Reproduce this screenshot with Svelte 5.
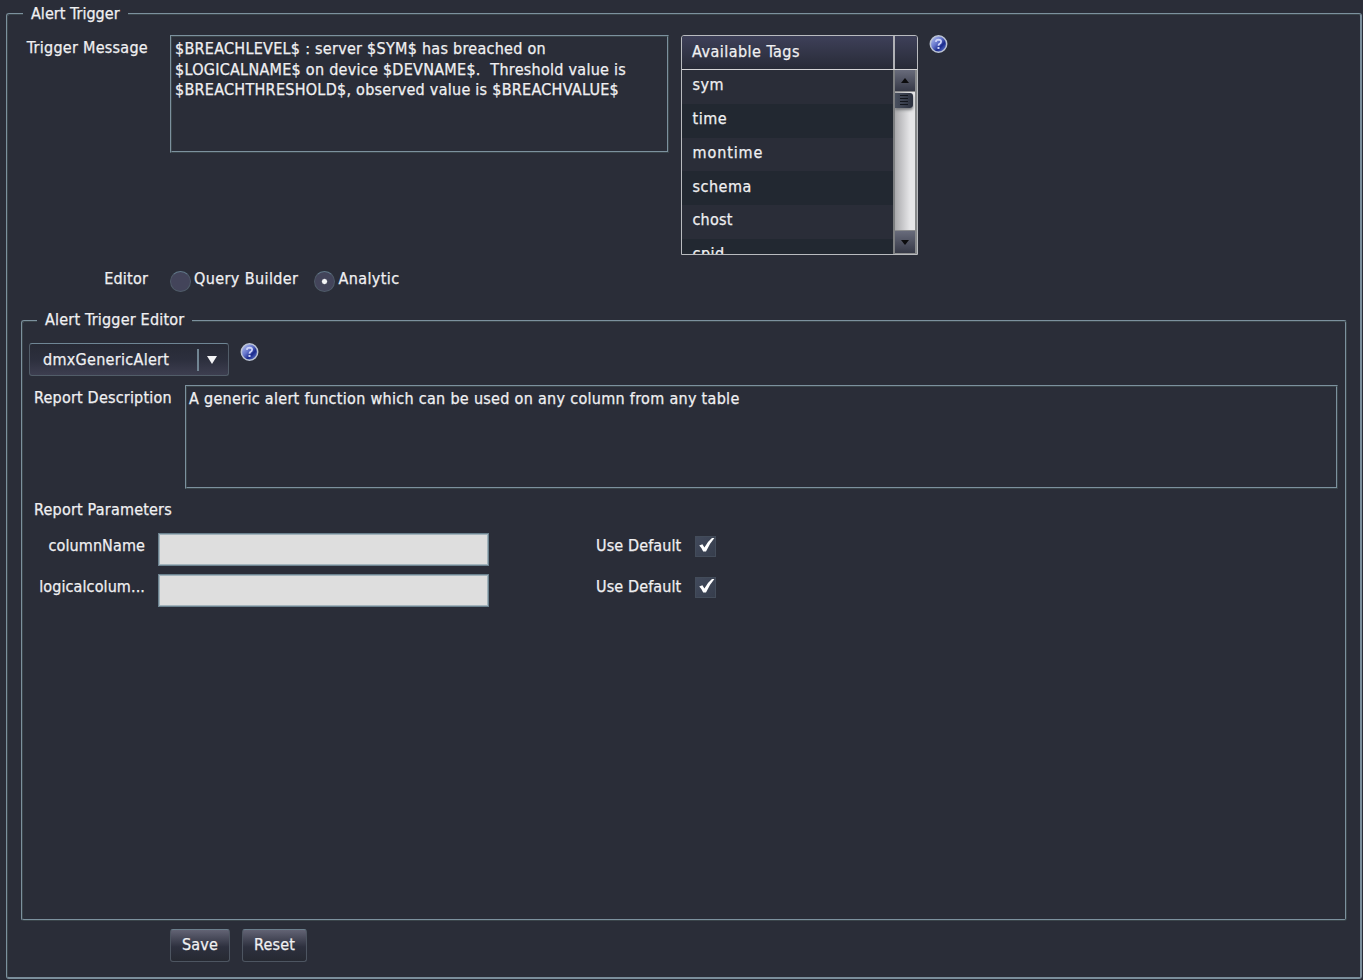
<script>
  let message = '$BREACHLEVEL$ : server $SYM$ has breached on\n$LOGICALNAME$ on device $DEVNAME$.  Threshold value is\n$BREACHTHRESHOLD$, observed value is $BREACHVALUE$';
  let tags = ['sym', 'time', 'montime', 'schema', 'chost', 'cpid'];
  let editor = $state('Analytic');
  let editors = ['Query Builder', 'Analytic'];
  let params = $state([
    { name: 'columnName', useDefault: true },
    { name: 'logicalcolum...', useDefault: true }
  ]);

  function toggle(i) {
    params[i].useDefault = !params[i].useDefault;
  }
</script>

{#snippet help()}
  <svg class="help" viewBox="0 0 19 19">
    <defs>
      <linearGradient id="ball" x1="0" y1="0" x2="1" y2="1">
        <stop offset="0" stop-color="#c3cff5" />
        <stop offset="0.42" stop-color="#6676cc" />
        <stop offset="0.65" stop-color="#1a2a8c" />
        <stop offset="1" stop-color="#7f9aec" />
      </linearGradient>
    </defs>
    <circle cx="9.5" cy="9" r="8.2" fill="url(#ball)" stroke="#bcc4d4" stroke-width="1.5" />
    <path d="M6.8 6.8Q7 4.6 9.6 4.6Q12.2 4.7 12.1 6.8Q12 8.2 10.5 8.9Q9.5 9.4 9.5 10.8" fill="none" stroke="#cdd4fa" stroke-width="1.8" />
    <rect x="8.5" y="12" width="2" height="2" fill="#cdd4fa" />
  </svg>
{/snippet}

<div class="page">
  <fieldset class="panel outer">
    <legend>Alert Trigger</legend>

    <div class="message-row">
      <span class="label trigger">Trigger Message</span>
      <div class="box message">{message}</div>
      <div class="tags">
        <div class="tags-head">
          <span>Available Tags</span>
          <i></i>
        </div>
        <div class="tags-body">
          <div class="tags-list">
            {#each tags as tag}
              <div class="tag">{tag}</div>
            {/each}
          </div>
          <div class="scroll">
            <div class="scroll-btn up">
              <svg viewBox="0 0 8 5"><path d="M0 5L4 0L8 5Z" /></svg>
            </div>
            <div class="thumb"><i></i></div>
            <div class="scroll-btn down">
              <svg viewBox="0 0 8 5"><path d="M0 0L4 5L8 0Z" /></svg>
            </div>
          </div>
        </div>
      </div>
      {@render help()}
    </div>

    <div class="editor-row">
      <span class="label">Editor</span>
      {#each editors as name}
        <button class="radio" onclick={() => (editor = name)}>
          <span class="dot" class:on={editor === name}></span>
          <span class="radio-text">{name}</span>
        </button>
      {/each}
    </div>

    <fieldset class="panel inner">
      <legend class="sub">Alert Trigger Editor</legend>
      <div class="select-row">
        <div class="select">
          <span>dmxGenericAlert</span>
          <i></i>
          <svg viewBox="0 0 10 8"><path d="M0 0H10L5 8Z" /></svg>
        </div>
        {@render help()}
      </div>
      <div class="desc-row">
        <span class="desc-label">Report Description</span>
        <div class="box desc">A generic alert function which can be used on any column from any table</div>
      </div>
      <div class="params-title">Report Parameters</div>
      {#each params as param, i}
        <div class="param">
          <span class="param-name">{param.name}</span>
          <div class="field"></div>
          <span class="use">Use Default</span>
          <button class="check" aria-label="Use Default" onclick={() => toggle(i)}>
            {#if param.useDefault}
              <svg viewBox="0 0 21 21"><path d="M4.2 9.6L7.4 8.2L9.4 11.6Q12.5 5.5 17 2H19.4Q14.2 8 11 15.6H8.2Q6.8 12 4.2 9.6Z" /></svg>
            {/if}
          </button>
        </div>
      {/each}
    </fieldset>

    <div class="actions">
      <button class="btn save">Save</button>
      <button class="btn reset">Reset</button>
    </div>
  </fieldset>
</div>

<style>
:global(body) {
  background: #2a2d38;
}
.page {
  width: 1363px;
  height: 980px;
  box-sizing: border-box;
  padding: 0 1px 1px 6px;
  overflow: hidden;
  background: #2a2d38;
  color: #f0f0f2;
  font-family: 'DejaVu Sans Condensed', 'DejaVu Sans', sans-serif;
  font-stretch: condensed;
  font-size: 16px;
  line-height: 20px;
  letter-spacing: 0.2px;
  -webkit-text-stroke: 0.25px #f0f0f2;
}
.page * {
  box-sizing: border-box;
}
button {
  font: inherit;
  letter-spacing: inherit;
  color: inherit;
  padding: 0;
  margin: 0;
  border: 0;
  background: none;
}
svg {
  display: block;
}
.panel {
  margin: 0;
  min-width: 0;
  border: 2px ridge #7c919e;
  border-radius: 3px;
}
.outer {
  height: 979px;
  padding: 0 13px 0 13px;
  border-right: 2px solid #7b8e9b;
  border-bottom: 2px solid #7b8e9b;
}
.inner {
  height: 614px;
  padding: 0 7px 0 6px;
}
legend {
  height: 28px;
  line-height: 27px;
  padding: 0 8px;
  margin-left: 2px;
  white-space: nowrap;
  letter-spacing: 0.03px;
}
legend.sub {
  margin-left: 8px;
  line-height: 25px;
  letter-spacing: 0.2px;
}
.box {
  border: 2px ridge #7c919e;
  white-space: pre;
  padding: 2px 3px;
}
.message-row {
  display: flex;
  height: 220px;
  margin-top: 7px;
}
.label {
  width: 127px;
  text-align: right;
  margin-right: 22px;
  white-space: nowrap;
}
.trigger {
  padding-top: 3px;
  letter-spacing: 0.27px;
}
.message {
  width: 499px;
  height: 118px;
  line-height: 20.6px;
  letter-spacing: 0.27px;
}
.tags {
  display: flex;
  flex-direction: column;
  width: 237px;
  height: 220px;
  margin-left: 12px;
  margin-right: 11px;
  border: 1px solid #b9bbbf;
  border-radius: 3px 3px 0 0;
  overflow: hidden;
}
.tags-head {
  display: flex;
  height: 34px;
  flex: none;
  border-bottom: 1px solid #d4d4d6;
  background: linear-gradient(#3e4059, #282b37);
}
.tags-head span {
  width: 211px;
  padding: 6px 10px;
  letter-spacing: 0.48px;
}
.tags-head i {
  width: 2px;
  background: #b0b1b6;
}
.tags-body {
  display: flex;
  flex: 1;
  min-height: 0;
}
.tags-list {
  width: 211px;
  overflow: hidden;
}
.tag {
  height: 33.75px;
  padding: 5.4px 10.5px;
  letter-spacing: 0.5px;
}
.tag:nth-child(3) {
  letter-spacing: 0.9px;
}
.tag:nth-child(5) {
  letter-spacing: 0.2px;
}
.tag:nth-child(even) {
  background: #222831;
}
.scroll {
  display: flex;
  flex-direction: column;
  width: 24px;
  border-left: 2px solid #7c7e80;
  border-right: 2px solid #86888a;
  background: linear-gradient(90deg, #a9a9ac, #e6e6e8 75%);
}
.scroll-btn {
  display: flex;
  align-items: center;
  justify-content: center;
  height: 22px;
  border-bottom: 1px solid #8a8b8d;
  background: linear-gradient(#686b7b, #363947);
}
.scroll-btn svg {
  width: 8px;
  height: 5px;
  fill: #0c0c0e;
}
.down {
  margin-top: auto;
  height: 24px;
  border-top: 1px solid #8a8b8d;
}
.thumb {
  width: 18px;
  height: 15px;
  margin-top: 1px;
  padding: 2px 5px;
  border-radius: 0 3px 3px 0;
  background: linear-gradient(90deg, #49505f, #2b303e);
  box-shadow: 0 2px 3px #77797c;
}
.thumb i {
  display: block;
  width: 8px;
  height: 11px;
  background: repeating-linear-gradient(#13161d 0 1px, transparent 1px 3px);
}
.help {
  width: 19px;
  height: 19px;
  flex: none;
}
.editor-row {
  display: flex;
  height: 20px;
  margin-top: 14px;
}
.radio {
  display: flex;
  height: 20px;
  margin-right: 16px;
  white-space: nowrap;
  letter-spacing: 0.4px;
}
.dot {
  width: 21px;
  height: 21px;
  margin: 2px 3px 0 0;
  border-radius: 50%;
  border: 1px solid #4f5b69;
  border-top-color: #61798a;
  background: #43445a;
}
.dot.on {
  background: radial-gradient(circle at 50% 50%, #f4f4f6 0 2px, #43445a 3.2px);
}
.editor-row + .inner {
  margin-top: 18px;
}
.select-row {
  display: flex;
  height: 34px;
  margin-top: 7px;
}
.select-row .help {
  margin: 1px 0 0 11px;
}
.select {
  display: flex;
  align-items: center;
  width: 200px;
  height: 33px;
  margin-top: 1px;
  padding-left: 13px;
  border: 1px solid #525d69;
  border-top-color: #6f8695;
  border-radius: 3px;
  background: linear-gradient(#272a35, #2c2f3d 50%, #3d3e50);
}
.select span {
  width: 154px;
  letter-spacing: 0.3px;
}
.select i {
  width: 2px;
  height: 22px;
  margin-right: 8px;
  background: #718593;
}
.select svg {
  width: 10px;
  height: 8px;
  fill: #f4f4f6;
}
.desc-row {
  display: flex;
  margin-top: 9px;
}
.desc-label {
  width: 156px;
  padding: 3px 0 0 5px;
  white-space: nowrap;
}
.desc {
  width: 1153px;
  height: 104px;
  padding-left: 2px;
  letter-spacing: 0.3px;
}
.params-title {
  margin: 11px 0 13px 5px;
}
.param {
  display: flex;
  height: 33px;
  margin-bottom: 8px;
}
.param-name {
  width: 116px;
  margin-right: 13px;
  padding-top: 3px;
  text-align: right;
  letter-spacing: 0.1px;
}
.field {
  width: 331px;
  height: 33px;
  border: 1px solid #6b828f;
  box-shadow: inset 0 0 0 1px #a3b3bb;
  background: #dedede;
}
.use {
  width: 99px;
  margin-left: 107px;
  padding-top: 3px;
  white-space: nowrap;
  letter-spacing: 0.12px;
}
.check {
  width: 21px;
  height: 21px;
  margin-top: 3px;
  background: linear-gradient(135deg, #424a5c, #363d4c);
  border: 1px solid #434c5a;
}
.check svg {
  width: 21px;
  height: 21px;
  margin: -1px;
  fill: #fff;
}
.actions {
  display: flex;
  gap: 12px;
  margin: 8px 0 0 149px;
}
.btn {
  height: 33px;
  padding-bottom: 1px;
  border: 1px solid #4d5561;
  border-top-color: #6c7f8d;
  border-radius: 3px;
  background: linear-gradient(#626374, #2d303e 55%, #262932);
}
.save {
  width: 60px;
}
.reset {
  width: 65px;
}
</style>
